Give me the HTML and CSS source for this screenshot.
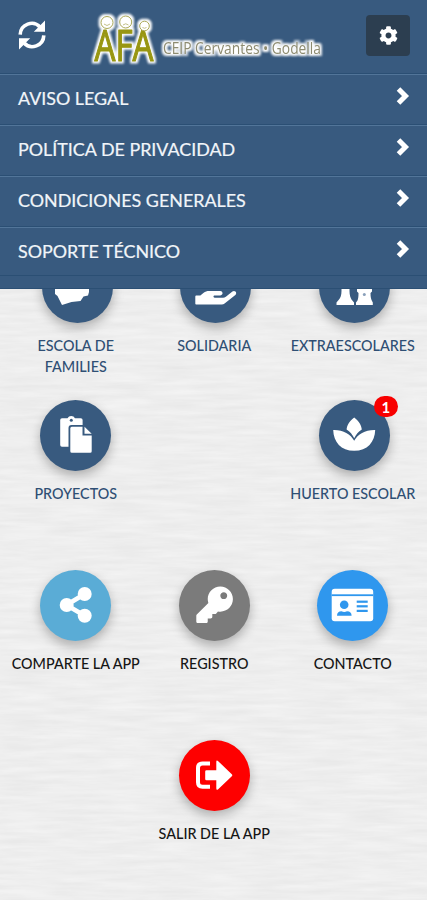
FILE: index.html
```html
<!DOCTYPE html>
<html lang="es">
<head>
<meta charset="utf-8">
<meta name="viewport" content="width=device-width, initial-scale=1">
<title>AFA CEIP Cervantes</title>
<link rel="stylesheet" href="styles.css">
</head>
<body>
<svg class="paper" aria-hidden="true">
  <filter id="grain" x="0" y="0" width="100%" height="100%" color-interpolation-filters="sRGB">
    <feTurbulence type="fractalNoise" baseFrequency="0.02 0.2" numOctaves="3" seed="4"/>
    <feColorMatrix values="0.055 0 0 0 0.905  0.055 0 0 0 0.905  0.055 0 0 0 0.905  0 0 0 0 1"/>
  </filter>
  <rect width="100%" height="100%" filter="url(#grain)"/>
</svg>

<div class="top">
  <header class="bar">
    <svg class="refresh" viewBox="0 0 30 32">
      <path d="M3.2 15.6A11.5 11.5 0 0 1 23.2 8.2M26.8 16.4A11.5 11.5 0 0 1 6.8 23.8" fill="none" stroke="#fff" stroke-width="3.6"/>
      <path d="M28 1.5V12.8H16.8ZM2 30.5V19.2H13.2Z" fill="#fff"/>
    </svg>
    <svg class="logo" viewBox="0 0 240 58">
      <defs>
        <filter id="halo" x="-10%" y="-20%" width="120%" height="140%" color-interpolation-filters="sRGB">
          <feMorphology in="SourceAlpha" operator="dilate" radius="1.5"/>
          <feGaussianBlur stdDeviation="1.3" result="b"/>
          <feFlood flood-color="#fff"/>
          <feComposite in2="b" operator="in" result="g"/>
          <feMerge><feMergeNode in="g"/><feMergeNode in="SourceGraphic"/></feMerge>
        </filter>
      </defs>
      <g filter="url(#halo)">
        <text class="afa" x="4.500" y="53" textLength="59" lengthAdjust="spacingAndGlyphs">AFA</text>
        <g fill="#fff" stroke="#a9a756" stroke-width="1">
          <circle cx="17" cy="14.500" r="6"/><circle cx="35.700" cy="14" r="6"/><circle cx="54.500" cy="18" r="4.800"/>
        </g>
        <g fill="none" stroke="#c4c18a" stroke-width="1">
          <path d="M14 16q3 3 6 0M33 17q2.700-2.500 5.500 0M52.500 19.500q2 1.500 4 0"/>
        </g>
      </g>
      <text class="school" x="73" y="46" textLength="158" lengthAdjust="spacingAndGlyphs" filter="url(#halo)">CEIP Cervantes • Godella</text>
    </svg>
    <button class="settings" aria-label="Ajustes">
      <svg viewBox="0 0 512 512"><path fill="#fff" d="M487.400 315.700l-42.600-24.600c4.300-23.200 4.300-47 0-70.200l42.600-24.600c4.900-2.800 7.100-8.600 5.500-14-11.100-35.600-30-67.800-54.700-94.600-3.800-4.100-10-5.100-14.800-2.300L380.800 110c-17.900-15.400-38.500-27.300-60.800-35.100V25.800c0-5.600-3.900-10.500-9.400-11.700-36.700-8.200-74.300-7.800-109.200 0-5.500 1.200-9.400 6.100-9.400 11.700V75c-22.200 7.900-42.800 19.800-60.800 35.100L88.700 85.500c-4.900-2.800-11-1.900-14.800 2.300-24.700 26.700-43.600 58.900-54.700 94.600-1.700 5.400.6 11.200 5.500 14L67.300 221c-4.300 23.200-4.300 47 0 70.200l-42.600 24.600c-4.900 2.800-7.100 8.600-5.500 14 11.100 35.600 30 67.800 54.700 94.600 3.800 4.100 10 5.100 14.800 2.300l42.600-24.600c17.900 15.400 38.500 27.300 60.800 35.100v49.200c0 5.600 3.900 10.500 9.400 11.700 36.700 8.200 74.300 7.800 109.200 0 5.500-1.200 9.400-6.100 9.400-11.700v-49.200c22.200-7.900 42.800-19.800 60.800-35.100l42.600 24.600c4.900 2.800 11 1.900 14.800-2.300 24.700-26.700 43.600-58.900 54.700-94.600 1.500-5.500-.7-11.300-5.600-14.100zM256 336c-44.100 0-80-35.900-80-80s35.900-80 80-80 80 35.900 80 80-35.900 80-80 80z"/></svg>
    </button>
  </header>
  <nav class="menu">
    <a class="row"><span>AVISO LEGAL</span><svg class="chev" viewBox="0 0 14 20"><path d="M2.500 3L9.500 10L2.500 17"/></svg></a>
    <a class="row"><span>POLÍTICA DE PRIVACIDAD</span><svg class="chev" viewBox="0 0 14 20"><path d="M2.500 3L9.500 10L2.500 17"/></svg></a>
    <a class="row"><span>CONDICIONES GENERALES</span><svg class="chev" viewBox="0 0 14 20"><path d="M2.500 3L9.500 10L2.500 17"/></svg></a>
    <a class="row"><span>SOPORTE TÉCNICO</span><svg class="chev" viewBox="0 0 14 20"><path d="M2.500 3L9.500 10L2.500 17"/></svg></a>
  </nav>
</div>

<main class="grid">
  <a class="tile shifted">
    <span class="disc"><svg viewBox="0 0 71 71"><path d="M13 32V42L15.500 44L20 53L29.500 50L38.500 49L41.500 44.500L46 43.500L47 40V32Z"/></svg></span>
    <span class="label">ESCOLA DE<br>FAMILIES</span>
  </a>
  <a class="tile shifted">
    <span class="disc"><svg viewBox="0 0 71 71"><path transform="translate(15.300 16.200) scale(.071)" d="M565.300 328.100c-11.800-10.700-30.200-10-42.600 0L430.300 402c-11.300 9.100-25.400 14-40 14H272c-8.800 0-16-7.200-16-16s7.200-16 16-16h78.300c15.900 0 30.700-10.900 33.300-26.600 3.300-20-12.100-37.400-31.600-37.400H192c-27 0-53.100 9.300-74.100 26.300L71.400 384H16c-8.800 0-16 7.200-16 16v96c0 8.800 7.200 16 16 16h356.800c14.500 0 28.600-4.900 40-14L564 377c15.200-12.100 16.400-35.300 1.300-48.900z"/></svg></span>
    <span class="label">SOLIDARIA</span>
  </a>
  <a class="tile shifted">
    <span class="disc"><svg viewBox="0 0 71 71"><path d="M22.500 34H30.500V39C30.500 43 31.500 46 32.500 47.500L35 50.500V53H17.500V50.500L20 47.500C21.500 46 22.500 43 22.500 39ZM38 34H53V39.500L51.500 41C51.500 45 52 47 53 49L53.800 50.500V53H37V50.500L38.500 48.500C39.300 46.500 39.500 44 39.500 41L38 39.500Z"/><circle cx="45.300" cy="42.500" r="1.500" fill="#8aa0ba"/></svg></span>
    <span class="label">EXTRAESCOLARES</span>
  </a>

  <a class="tile">
    <span class="disc"><svg viewBox="0 0 71 71"><path d="M22 18.300H27.500A4.200 4.200 0 0 1 35 18.300H40.800Q42.600 18.300 42.600 20V25H31.500Q28.500 25 28.500 28V46.800H22Q20.200 46.800 20.200 45V20Q20.200 18.300 22 18.300Z"/><circle cx="31.300" cy="20.300" r="1.500" fill="#385a7f"/><path d="M31.800 26.800H42.500V35.500H51.700V51.200Q51.700 52.700 50.200 52.700H31.800Q30.300 52.700 30.300 51.200V28.300Q30.300 26.800 31.800 26.800ZM44.500 26.800L51.700 33.800H44.500Z"/></svg></span>
    <span class="label">PROYECTOS</span>
  </a>
  <span></span>
  <a class="tile shifted">
    <span class="disc"><svg viewBox="0 0 71 71"><path d="M35.200 17.500C30 21.500 28 25.500 27.600 29.500C31 31.800 33.500 34.500 35.200 38.300C36.900 34.500 39.400 31.800 42.800 29.500C42.400 25.500 40.400 21.500 35.200 17.500ZM35.200 40.700C31.500 34 24 29.700 14.200 30C14.500 42 22 50.800 35.200 50.800C48.400 50.800 55.900 42 56.200 30C46.400 29.700 38.900 34 35.200 40.700Z"/></svg><b class="badge">1</b></span>
    <span class="label">HUERTO ESCOLAR</span>
  </a>

  <a class="tile action">
    <span class="disc sky"><svg viewBox="0 0 71 71"><path d="M44.700 24L26.500 35L44.700 45.700" fill="none" stroke="#fff" stroke-width="4.600"/><circle cx="26.700" cy="35" r="7"/><circle cx="44.700" cy="24" r="7"/><circle cx="44.700" cy="45.800" r="7"/></svg></span>
    <span class="label">COMPARTE LA APP</span>
  </a>
  <a class="tile action">
    <span class="disc gray"><svg viewBox="0 0 71 71"><path transform="translate(17.300 16.500) scale(.0715)" d="M512 176.001C512 273.203 433.202 352 336 352c-11.220 0-22.190-1.062-32.827-3.069l-24.012 27.014A23.999 23.999 0 0 1 261.223 384H224v40c0 13.255-10.745 24-24 24h-40v40c0 13.255-10.745 24-24 24H24c-13.255 0-24-10.745-24-24v-78.059c0-6.365 2.529-12.470 7.029-16.971l161.802-161.802C163.108 213.814 160 195.271 160 176 160 78.798 238.797.001 335.999 0 433.488-.001 512 78.511 512 176.001zM336 128c0 26.510 21.490 48 48 48s48-21.490 48-48-21.490-48-48-48-48 21.490-48 48z"/></svg></span>
    <span class="label">REGISTRO</span>
  </a>
  <a class="tile action">
    <span class="disc blue"><svg viewBox="0 0 71 71"><rect x="14.700" y="18.700" width="41.500" height="32.500" rx="3"/><g fill="#2f97ee"><rect x="14.700" y="24.300" width="41.500" height="1.800"/><circle cx="27.200" cy="34.800" r="4.300"/><path d="M20 45.800Q20 41.300 24.500 41.300Q27.200 42.600 30 41.300Q34.600 41.300 34.600 45.800Z"/><rect x="39.700" y="30.600" width="11" height="2.200"/><rect x="39.700" y="35.200" width="11" height="2.200"/><rect x="39.700" y="39.800" width="11" height="2.200"/></g></svg></span>
    <span class="label">CONTACTO</span>
  </a>

  <span></span>
  <a class="tile action">
    <span class="disc red"><svg viewBox="0 0 71 71"><path d="M31 23.500H23.500Q19 23.500 19 28V42.300Q19 46.800 23.500 46.800H31" fill="none" stroke="#fff" stroke-width="4"/><path d="M27.500 30.300H37.300V22Q37.300 19.500 39.200 21.200L52.800 34.200Q53.800 35.200 52.800 36.200L39.200 49.200Q37.300 50.800 37.300 48.300V40.300H27.500Q26.200 40.300 26.200 39V31.600Q26.200 30.300 27.500 30.300Z"/></svg></span>
    <span class="label">SALIR DE LA APP</span>
  </a>
  <span></span>
</main>
</body>
</html>
```
FILE: styles.css
```css
* { box-sizing: border-box; }

body {
  margin: 0;
  position: relative;
  height: 900px;
  overflow: hidden;
  background: #ededed;
  font-family: Lato, "Open Sans", sans-serif;
}

.paper {
  position: absolute;
  inset: 0;
  width: 100%;
  height: 100%;
}

/* The open menu covers the first row of tiles. */
.top {
  position: absolute;
  inset: 0 0 auto 0;
  z-index: 2;
  height: 289px;
  background: #385a7f;
  border-bottom: 1px solid #2b4f74;
}

.bar {
  display: flex;
  align-items: flex-start;
  height: 74px;
  padding: 8px 17px 0;
}

.refresh { width: 30px; height: 32px; margin-top: 11px; }
.logo { width: 240px; height: 58px; margin-left: 43px; overflow: visible; }

.afa {
  fill: #989612;
  stroke: #989612;
  stroke-width: 1.2;
  stroke-linejoin: round;
  font: 500 43px "Open Sans", sans-serif;
}
.school {
  fill: #8d8b70;
  font: 400 17px "Open Sans", sans-serif;
}

.settings {
  display: flex;
  align-items: center;
  justify-content: center;
  width: 44px;
  height: 41px;
  margin: 7px 0 0 auto;
  padding: 0;
  border: 0;
  border-radius: 4px;
  background: #2c3e50;
}
.settings svg { width: 19px; height: 19px; }

.menu { border-bottom: 1px solid #2b4f74; height: 202px; }

.row {
  display: flex;
  justify-content: space-between;
  height: 51px;
  padding: 11px 17px 0 18px;
  border-top: 1px solid #527599;
  box-shadow: 0 -1px 0 #2b4f74;
  color: #f1f5f9;
  font-size: 17.900px;
  line-height: 25px;
  -webkit-text-stroke: .2px #f1f5f9;
}
.chev { width: 14px; height: 20px; }
.chev path { fill: none; stroke: #fff; stroke-width: 5; }

.grid {
  position: relative;
  display: grid;
  grid-template-columns: repeat(3, 138.5px);
  grid-template-rows: 148.500px 170px 170px 120px;
  padding: 251.500px 0 0 6.500px;
}

.tile {
  display: flex;
  flex-direction: column;
  align-items: center;
  color: #2f4f74;
}
.action { color: #161616; }

.disc {
  position: relative;
  width: 71px;
  height: 71px;
  border-radius: 50%;
  background: #385a7f;
  box-shadow: 0 5px 11px rgba(0, 0, 0, .27);
}
.shifted .disc { left: 1.500px; }
.disc svg { display: block; width: 71px; height: 71px; fill: #fff; }
.sky { background: #5aacd6; }
.gray { background: #7b7b7b; }
.blue { background: #2f97ee; }
.red { background: #fe0000; }

.label {
  margin-top: 12px;
  font-size: 14.350px;
  font-weight: 500;
  line-height: 21px;
  text-align: center;
  white-space: nowrap;
}

.badge {
  position: absolute;
  left: 55px;
  top: -4px;
  width: 24px;
  height: 21px;
  border-radius: 11px;
  background: #f80000;
  color: #fff;
  font-size: 15px;
  font-weight: 700;
  line-height: 22px;
  text-align: center;
}
```
